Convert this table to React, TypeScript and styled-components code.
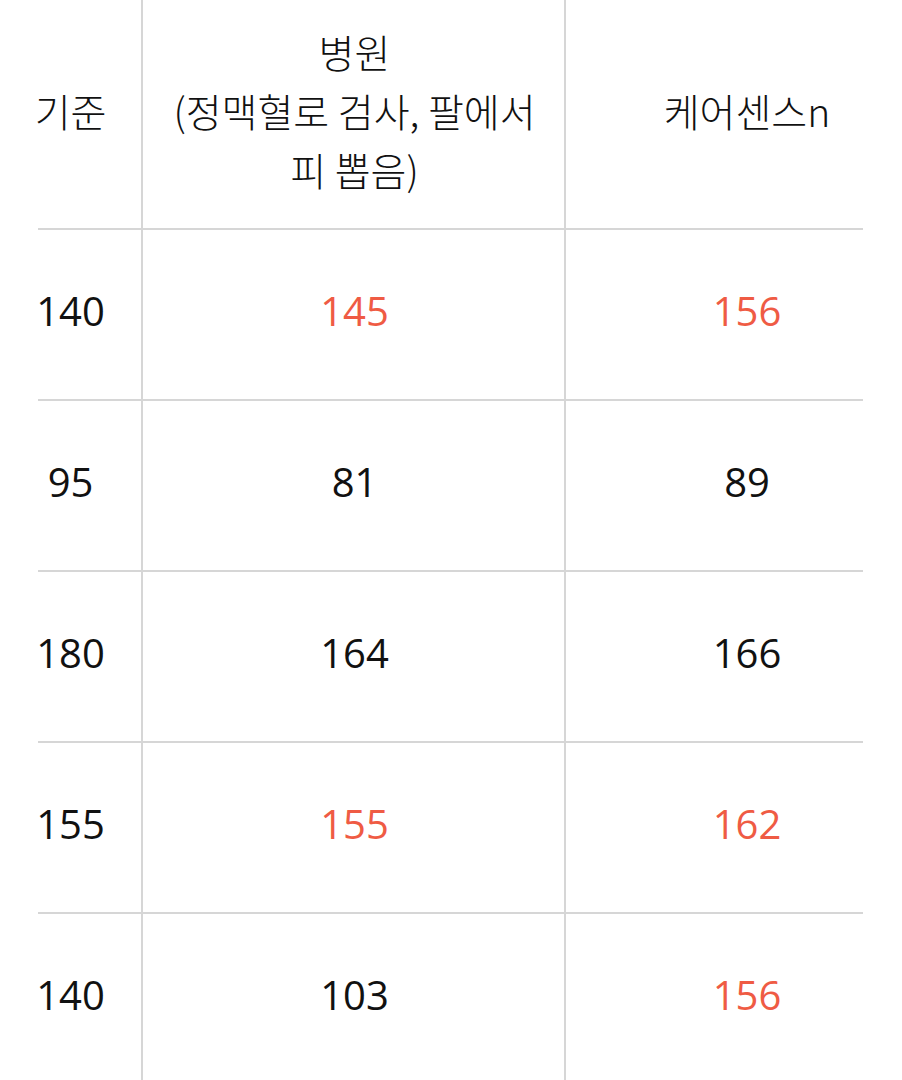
import React from "react";
import styled, { createGlobalStyle } from "styled-components";

const GlobalStyle = createGlobalStyle`
  html, body {
    margin: 0;
    padding: 0;
    background: #ffffff;
  }
  body {
    font-family: "Open Sans", "Noto Sans CJK KR", sans-serif;
    color: #111111;
  }
`;

const LINE = "#d6d6d6";

const Page = styled.div`
  width: 902px;
  height: 1080px;
  overflow: hidden;
  background: #fff;
`;

const Table = styled.div`
  margin-left: 38px;
  width: 825px;
  display: flex;
  flex-direction: column;
`;

const Row = styled.div<{ $height: number }>`
  display: grid;
  grid-template-columns: 105px 423px 1fr;
  height: ${(p) => p.$height}px;
  border-bottom: 2px solid ${LINE};
`;

const Cell = styled.div<{ $col: 1 | 2 | 3; $red?: boolean }>`
  display: flex;
  align-items: center;
  justify-content: center;
  text-align: center;
  white-space: nowrap;
  font-size: 40px;
  font-weight: 380;
  line-height: 59px;
  padding-bottom: 8px;
  color: ${(p) => (p.$red ? "#ef5b44" : "#111111")};
  border-left: ${(p) => (p.$col === 1 ? "none" : `2px solid ${LINE}`)};
  padding-right: ${(p) => (p.$col === 1 ? "40px" : "0")};
  padding-left: ${(p) => (p.$col === 3 ? "65px" : "0")};
  margin-left: ${(p) => (p.$col === 1 ? "0" : "-2px")};
`;

const HeaderText = styled.span`
  font-family: "Noto Sans CJK KR", "Noto Sans", sans-serif;
  font-size: 39px;
  font-weight: 300;
  line-height: 59px;
`;

type Value = { v: string; red?: boolean };

const rows: Value[][] = [
  [{ v: "140" }, { v: "145", red: true }, { v: "156", red: true }],
  [{ v: "95" }, { v: "81" }, { v: "89" }],
  [{ v: "180" }, { v: "164" }, { v: "166" }],
  [{ v: "155" }, { v: "155", red: true }, { v: "162", red: true }],
  [{ v: "140" }, { v: "103" }, { v: "156", red: true }],
];

export default function App() {
  return (
    <Page>
      <GlobalStyle />
      <Table>
        <Row $height={228}>
          <Cell $col={1}>
            <HeaderText>기준</HeaderText>
          </Cell>
          <Cell $col={2}>
            <HeaderText>
              병원
              <br />
              (정맥혈로 검사, 팔에서
              <br />피 뽑음)
            </HeaderText>
          </Cell>
          <Cell $col={3}>
            <HeaderText>케어센스n</HeaderText>
          </Cell>
        </Row>
        {rows.map((r, i) => (
          <Row key={i} $height={169}>
            {r.map((c, j) => (
              <Cell key={j} $col={(j + 1) as 1 | 2 | 3} $red={c.red}>
                {c.v}
              </Cell>
            ))}
          </Row>
        ))}
      </Table>
    </Page>
  );
}
